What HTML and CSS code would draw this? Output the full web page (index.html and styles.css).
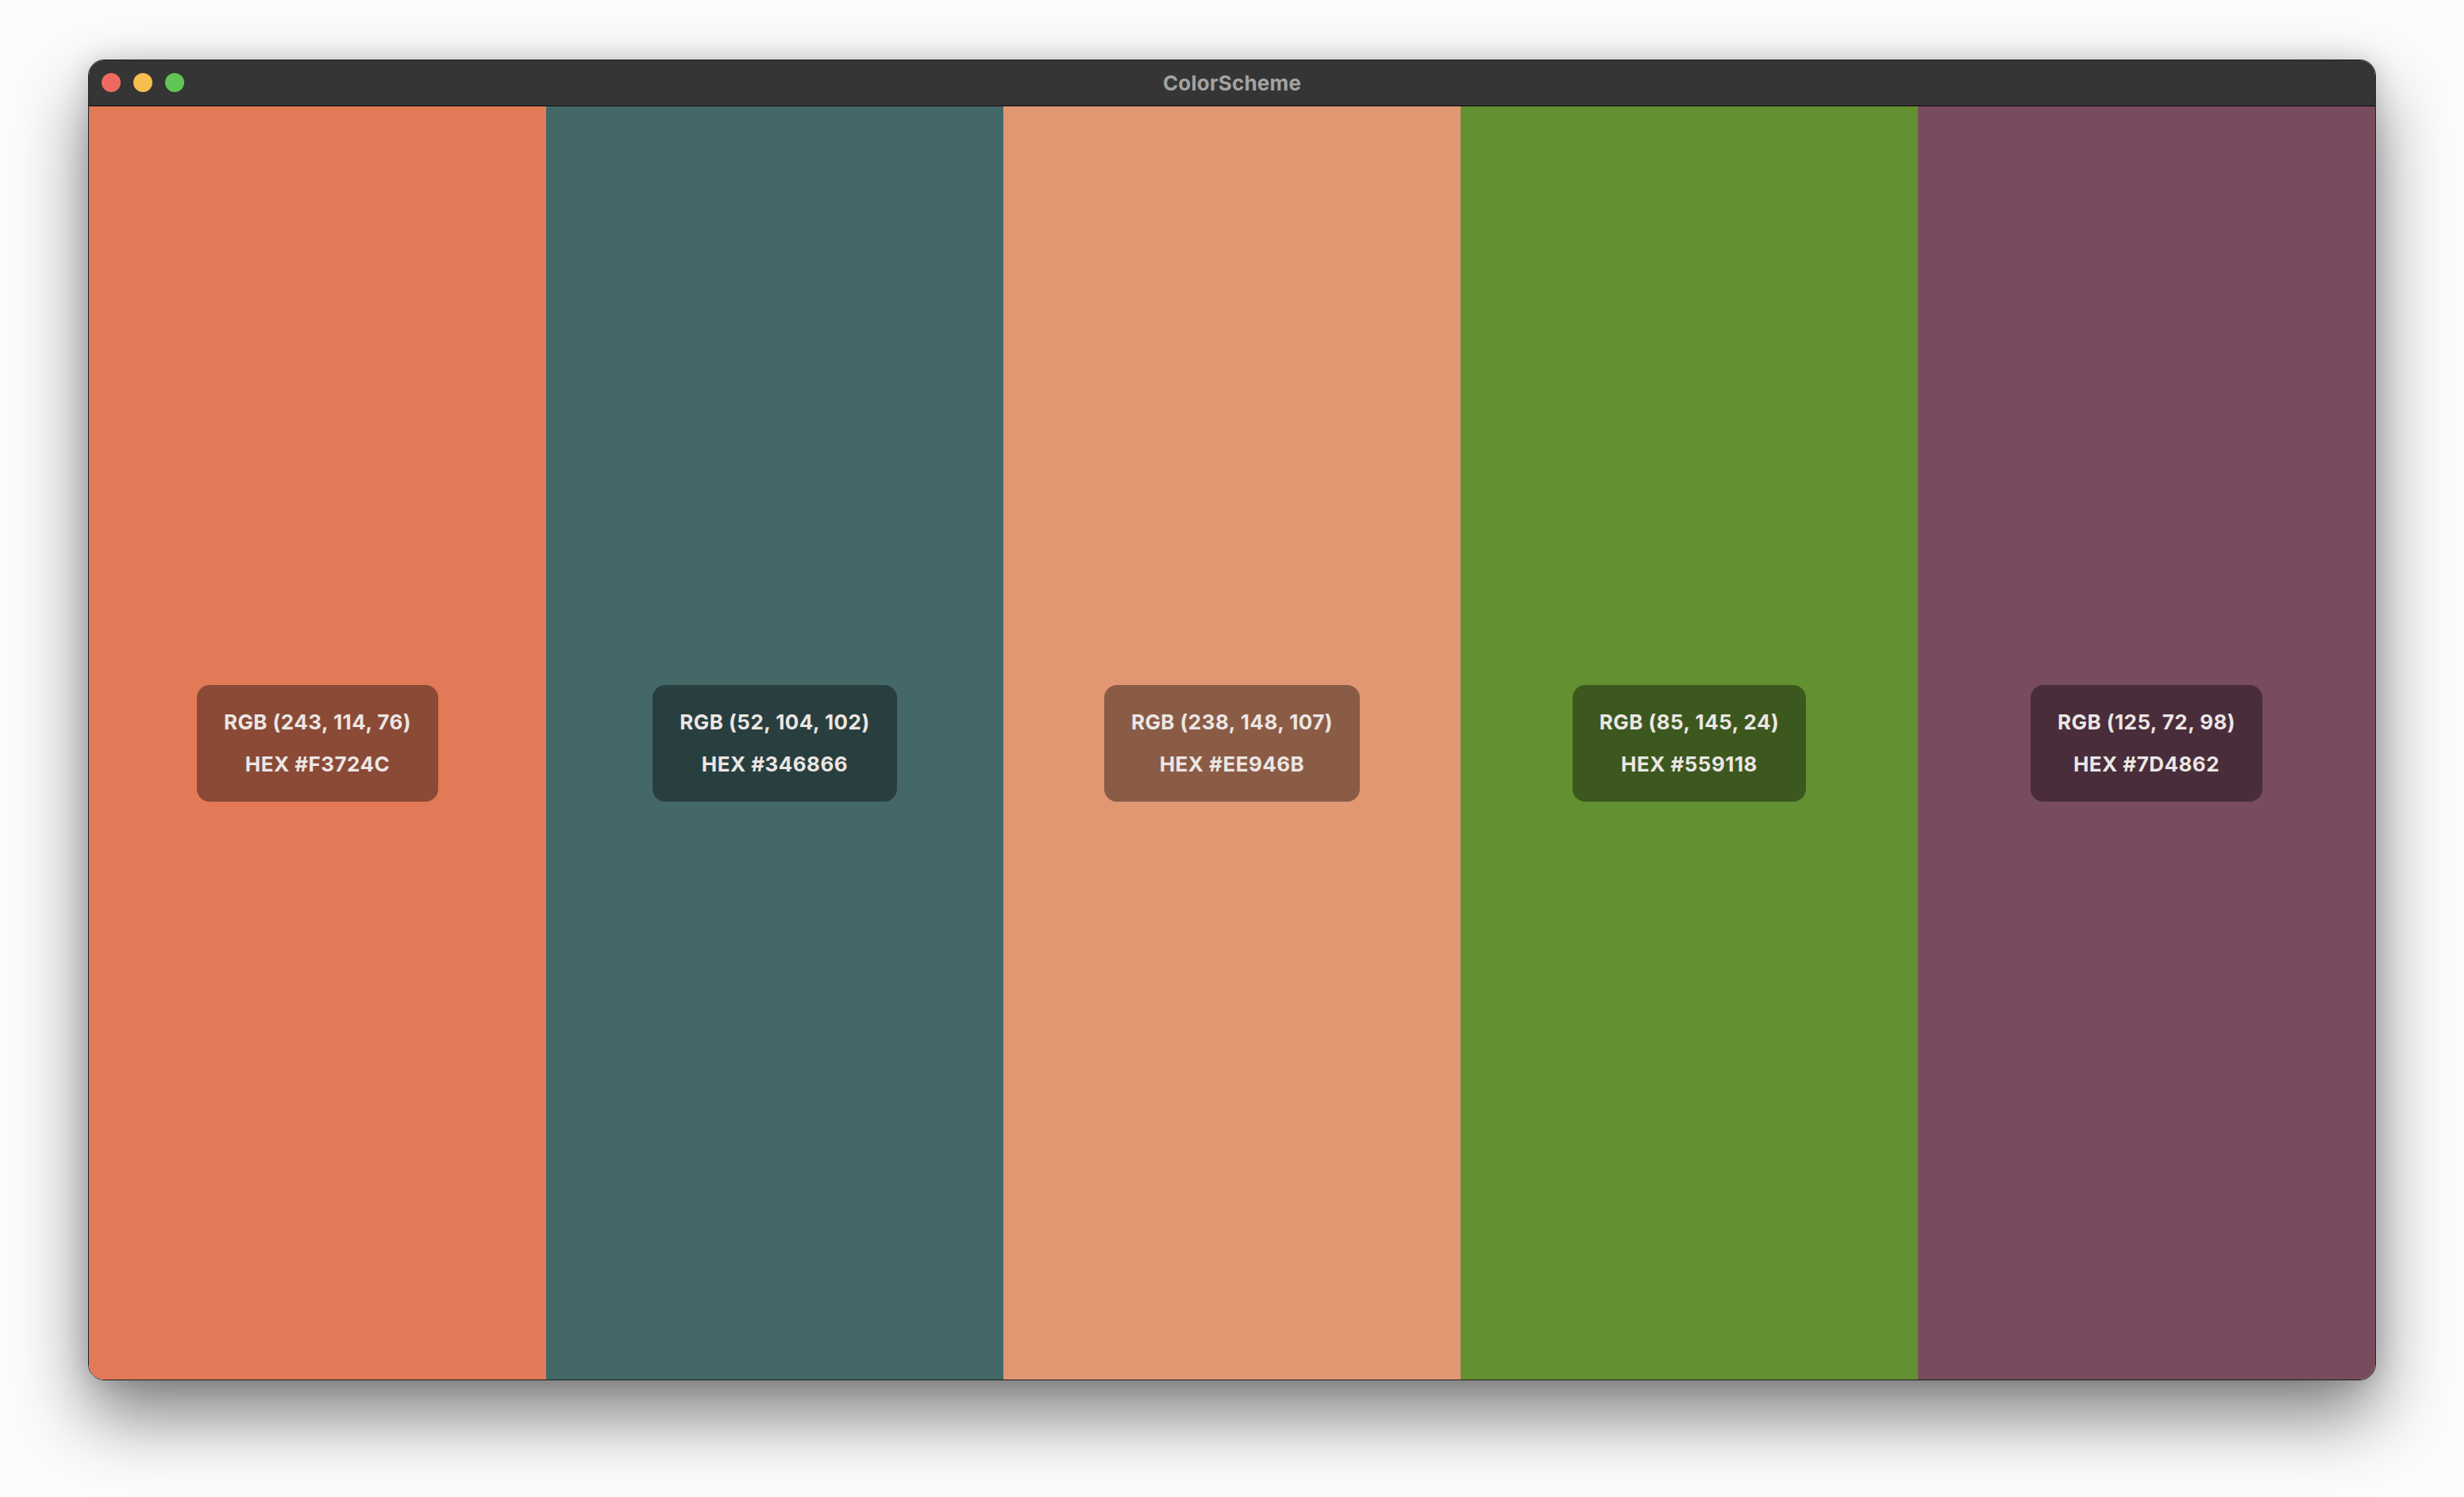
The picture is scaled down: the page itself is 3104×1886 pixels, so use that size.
FILE: index.html
```html
<!DOCTYPE html>
<html>
<head>
<meta charset="utf-8">
<title>ColorScheme</title>
<link rel="stylesheet" href="styles.css">
</head>
<body>
<div class="stage">
  <div class="window">
    <div class="titlebar">
      <div class="lights">
        <span class="light red"></span>
        <span class="light yellow"></span>
        <span class="light green"></span>
      </div>
      <div class="title">ColorScheme</div>
    </div>
    <div class="swatches">
      <div class="swatch c1"><div class="badge"><div>RGB (243, 114, 76)</div><div>HEX #F3724C</div></div></div>
      <div class="swatch c2"><div class="badge"><div>RGB (52, 104, 102)</div><div>HEX #346866</div></div></div>
      <div class="swatch c3"><div class="badge"><div>RGB (238, 148, 107)</div><div>HEX #EE946B</div></div></div>
      <div class="swatch c4"><div class="badge"><div>RGB (85, 145, 24)</div><div>HEX #559118</div></div></div>
      <div class="swatch c5"><div class="badge"><div>RGB (125, 72, 98)</div><div>HEX #7D4862</div></div></div>
    </div>
  </div>
</div>
</body>
</html>
```
FILE: styles.css
```css
html, body {
  margin: 0;
  padding: 0;
  background: #ffffff;
}
.stage {
  width: 3104px;
  height: 1886px;
  box-sizing: border-box;
  padding: 75px 0 0 111px;
  background: #fcfcfc;
}
.window {
  width: 2882px;
  height: 1664px;
  box-sizing: border-box;
  border: 1px solid #1e1e1e;
  border-radius: 20px;
  overflow: hidden;
  display: flex;
  flex-direction: column;
  box-shadow: 0 44px 90px rgba(0,0,0,0.5), 0 0 30px rgba(0,0,0,0.15);
  font-family: Inter, "Liberation Sans", sans-serif;
}
.titlebar {
  height: 57px;
  flex: none;
  background: #353535;
  border-bottom: 1px solid #0c0c0c;
  position: relative;
  display: flex;
  align-items: center;
  justify-content: center;
}
.lights {
  position: absolute;
  left: 16px;
  top: 16px;
  display: flex;
  gap: 16px;
}
.light {
  width: 24px;
  height: 24px;
  border-radius: 50%;
}
.red { background: #ee6a5f; }
.yellow { background: #f5be4f; }
.green { background: #61c454; }
.title {
  color: #a3a3a3;
  font-weight: 700;
  font-size: 26px;
  letter-spacing: 0.2px;
}
.swatches {
  flex: 1;
  display: grid;
  grid-template-columns: repeat(5, 1fr);
}
.swatch {
  display: flex;
  align-items: center;
  justify-content: center;
}
.c1 { background: #e27a57; }
.c2 { background: #436867; }
.c3 { background: #e29773; }
.c4 { background: #639131; }
.c5 { background: #784b5f; }
.badge {
  background: rgba(0,0,0,0.39);
  border-radius: 16px;
  padding: 31px 34px;
  display: flex;
  flex-direction: column;
  align-items: center;
  gap: 21px;
  color: #ece6e4;
  font-weight: 700;
  font-size: 26px;
  letter-spacing: 0.45px;
  line-height: 32px;
  margin-top: 1px;
}
```
